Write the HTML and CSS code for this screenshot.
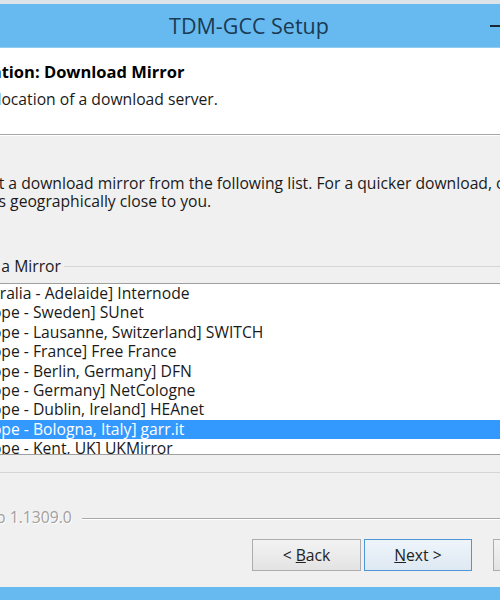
FILE: index.html
```html
<!DOCTYPE html>
<html lang="en">
<head>
    <meta charset="UTF-8">
    <meta name="viewport" content="width=device-width, initial-scale=1.0">
    <title>TDM-GCC Setup</title>
    <link rel="stylesheet" href="styles.css">
</head>
<body>
    <div class="window">
        <div class="titlebar">
            <span class="title">TDM-GCC Setup</span>
            <div class="caption-buttons">
                <span class="cap min"></span>
                <span class="cap max"></span>
                <span class="cap close"></span>
            </div>
        </div>
        <div class="header">
            <div class="header-title">Installation: Download Mirror</div>
            <div class="header-sub">Select the location of a download server.</div>
        </div>
        <div class="page">
            <p class="intro">Select a download mirror from the following list. For a quicker download, choose a mirror<br>that is geographically close to you.</p>
            <div class="group">
                <div class="group-title"><span>Select a Mirror</span></div>
                <div class="group-body">
                    <ul class="listbox">
                        <li>[Australia - Adelaide] Internode</li>
                        <li>[Europe - Sweden] SUnet</li>
                        <li>[Europe - Lausanne, Switzerland] SWITCH</li>
                        <li>[Europe - France] Free France</li>
                        <li>[Europe - Berlin, Germany] DFN</li>
                        <li>[Europe - Germany] NetCologne</li>
                        <li>[Europe - Dublin, Ireland] HEAnet</li>
                        <li class="selected">[Europe - Bologna, Italy] garr.it</li>
                        <li>[Europe - Kent, UK] UKMirror</li>
                        <li>[North America - USA] Ibiblio</li>
                    </ul>
                </div>
            </div>
            <div class="version">TDM-GCC Setup 1.1309.0</div>
            <div class="buttons">
                <button class="btn back">&lt; <u>B</u>ack</button>
                <button class="btn next"><u>N</u>ext &gt;</button>
                <button class="btn cancel">Cancel</button>
            </div>
        </div>
    </div>
</body>
</html>
```

FILE: styles.css
```css
body {
    margin: 0;
    overflow: hidden;
    background: #f0f0f0;
    font-family: 'Open Sans', sans-serif;
    font-size: 15.7px;
    color: #1a1a1a;
}
.window {
    width: 742px;
    height: 600px;
    margin-left: -122px;
    box-sizing: border-box;
    border-top: 4px solid #dde4e9;
    border-bottom: 13px solid #66baf0;
    display: flex;
    flex-direction: column;
    background: #f0f0f0;
}
.titlebar {
    height: 44px;
    box-sizing: border-box;
    background: #66baf0;
    border-bottom: 1px solid #8fcbf2;
    display: flex;
    align-items: center;
    justify-content: center;
    position: relative;
}
.title {
    font-size: 21.5px;
    color: #1b3a53;
}
.caption-buttons {
    position: absolute;
    right: 2px;
    top: 0;
    bottom: 0;
    display: flex;
}
.cap {
    width: 37px;
    display: flex;
    align-items: center;
    justify-content: center;
}
.cap.close {
    width: 66px;
}
.min::before {
    content: "";
    width: 14px;
    height: 2px;
    background: #1b2733;
}
.header {
    height: 87px;
    box-sizing: border-box;
    padding-top: 14px;
    background: #fff;
    border-bottom: 1px solid #a8a8a8;
}
.header-title {
    font-weight: 700;
    font-size: 16.5px;
    line-height: 20px;
    padding-left: 62px;
    color: #000;
}
.header-sub {
    margin-top: 8px;
    line-height: 18px;
    padding-left: 44px;
}
.page {
    flex: 1;
    border-top: 1px solid #fff;
    padding-right: 19px;
    display: flex;
    flex-direction: column;
}
.intro {
    margin: 38px 0 0 83px;
    line-height: 18px;
    white-space: nowrap;
}
.group {
    margin: 47px 0 0 66px;
    border: 1px solid #d5d5d5;
    border-top: none;
}
.group-title {
    display: flex;
    align-items: center;
    gap: 3px;
    height: 18px;
    line-height: 18px;
}
.group-title::before,
.group-title::after {
    content: "";
    border-top: 1px solid #d5d5d5;
}
.group-title::before {
    width: 6px;
}
.group-title::after {
    flex: 1;
}
.group-body {
    padding: 8px 8px 17px 13px;
}
.listbox {
    list-style: none;
    margin: 0;
    padding: 0;
    height: 172px;
    box-sizing: border-box;
    border: 1px solid #a0a0a0;
    background: #fff;
    overflow: hidden;
}
.listbox li {
    height: 19.4px;
    line-height: 19.4px;
    padding-left: 3px;
    white-space: nowrap;
}
.listbox li.selected {
    background: #3399ff;
    color: #fff;
}
.version {
    display: flex;
    align-items: center;
    gap: 10px;
    margin: 35px 0 0 11px;
    line-height: 18px;
    color: #a0a0a0;
    text-shadow: 1px 1px 0 #fff;
    white-space: nowrap;
}
.version::after {
    content: "";
    flex: 1;
    margin-top: 3px;
    border-top: 1px solid #a8a8a8;
    border-bottom: 1px solid #fff;
}
.buttons {
    display: flex;
    justify-content: flex-end;
    gap: 3px;
    margin-top: 13px;
}
.btn {
    width: 108px;
    height: 32px;
    font-family: 'Open Sans', sans-serif;
    font-size: 15.7px;
    color: #222;
    border: 1px solid #acacac;
    background: linear-gradient(#f3f3f3, #e3e3e3);
    padding: 0;
}
.btn.back {
    width: 109px;
}
.btn.next {
    border-color: #4f96d8;
    background: linear-gradient(#eef4fa, #dfe9f3);
}
.btn.cancel {
    margin-left: 18px;
}
```
